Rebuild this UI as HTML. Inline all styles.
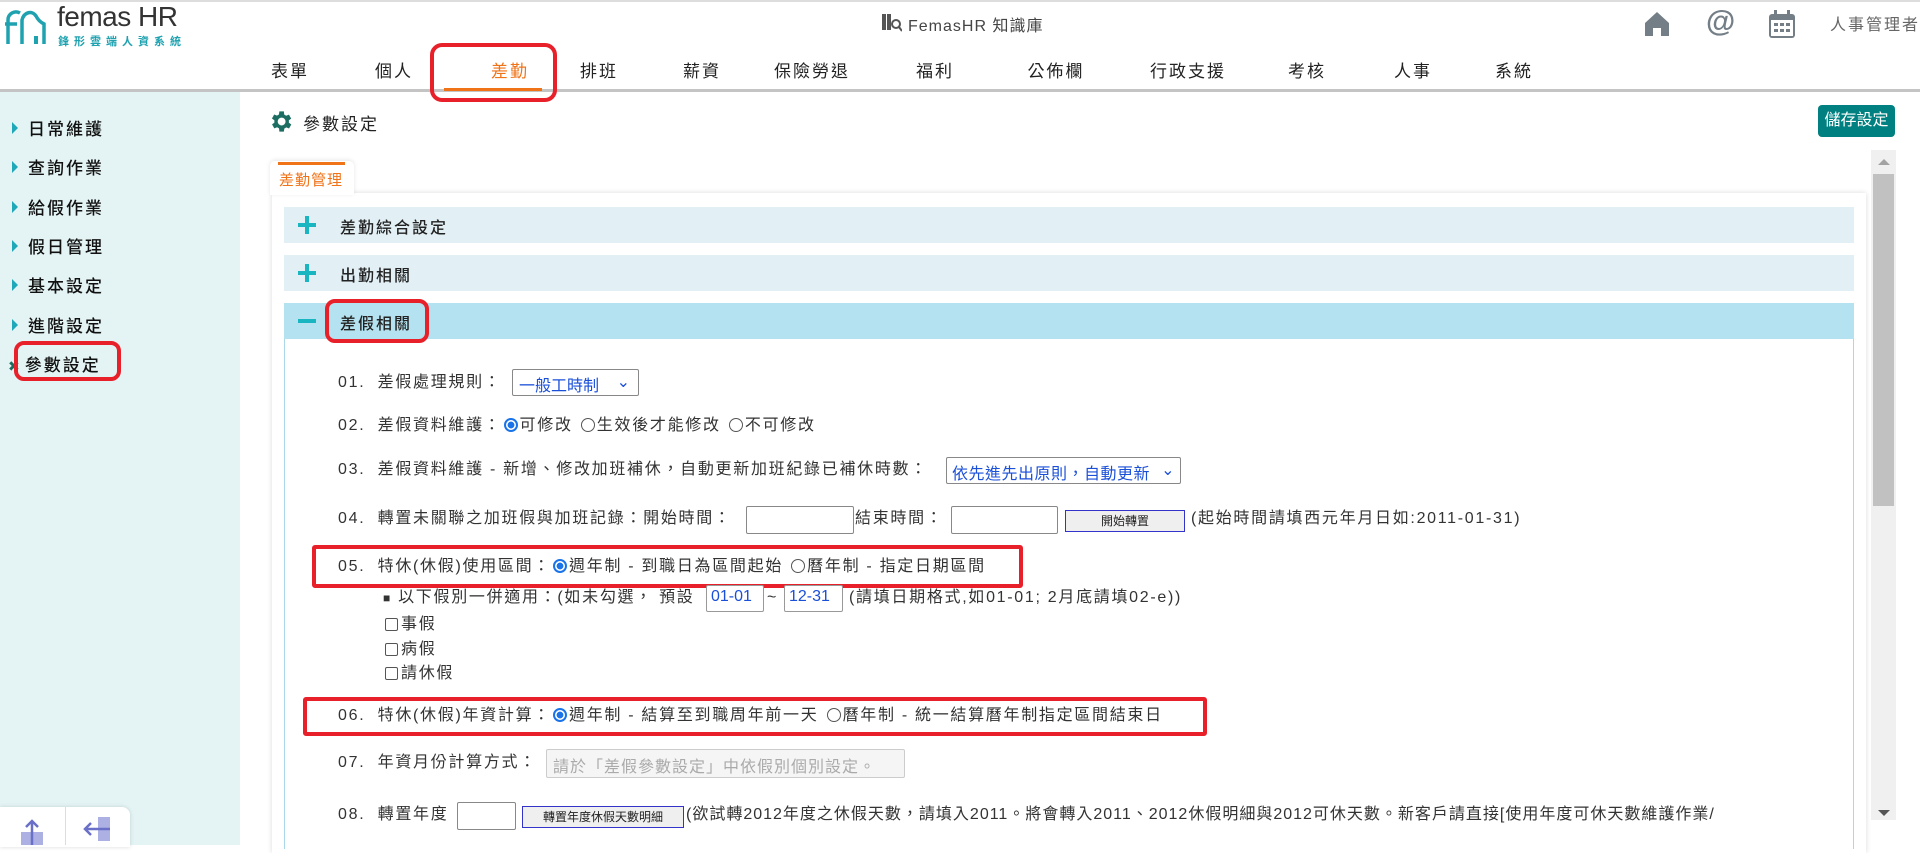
<!DOCTYPE html>
<html><head><meta charset="utf-8">
<style>
*{box-sizing:border-box;margin:0;padding:0}
body{width:1920px;height:845px;overflow:hidden;background:#fff;font-family:"Liberation Sans","Noto Sans CJK TC",sans-serif;color:#333;position:relative}
.a{position:absolute;white-space:nowrap}
.nav{top:57px;font-size:17px;color:#222;letter-spacing:2px;transform:translateX(-50%)}
.side{left:12px;font-size:17px;color:#111;letter-spacing:2px;font-weight:500}
.tri{display:inline-block;width:0;height:0;border-left:6px solid #1fa8b8;border-top:6px solid transparent;border-bottom:6px solid transparent;margin-right:10px;vertical-align:1px}
.row{left:284px;width:1570px;height:36px;background:#e2f0f6}
.row span{position:absolute;left:56px;top:7px;font-size:16px;letter-spacing:2px;color:#222;font-weight:500}
.plus{position:absolute;left:14px;top:9px;width:18px;height:18px}
.plus:before{content:"";position:absolute;left:0;top:7px;width:18px;height:4px;background:#19b5c0}
.plus.p:after{content:"";position:absolute;left:7px;top:0;width:4px;height:18px;background:#19b5c0}
.t{font-size:16px;letter-spacing:1.7px;color:#333;line-height:22px}
.box{border:1px solid #888;background:#fff;border-radius:2px}
.red{border:4px solid #e8202a;border-radius:6px}
.rd{display:inline-block;width:14px;height:14px;border-radius:50%;border:1px solid #555;vertical-align:-2px;margin:0 2px}
.rd.on{border:2px solid #1a73e8;background:radial-gradient(#1a73e8 45%,#fff 50%)}
.cb{display:inline-block;width:13px;height:13px;border:1px solid #555;border-radius:2px;vertical-align:-2px;margin-right:3px}
.btn{background:#efefef;border:1px solid #3333cc;font-size:12px;text-align:center;color:#222}
</style></head><body>
<div class="a" style="left:0;top:0;width:1920px;height:2px;background:#ddd"></div>
<svg class="a" style="left:4px;top:6px" width="44" height="40" viewBox="0 0 44 40"><path d="M4 38V14a8 8 0 0 1 12-7M1 18h12" stroke="#1fa2b0" stroke-width="3.5" fill="none"/><path d="M18 38V14c2-8 10-10 14-4 2 4 4 6 8 8v20" stroke="#1fa2b0" stroke-width="3.5" fill="none"/><rect x="30" y="30" width="4" height="8" fill="#1fa2b0"/></svg>
<div class="a" style="left:57px;top:1px;font-size:28px;color:#333;letter-spacing:-0.5px">femas HR</div>
<div class="a" style="left:58px;top:33px;font-size:11px;color:#1fa2b0;letter-spacing:5px;font-weight:bold">鋒形雲端人資系統</div>
<svg class="a" style="left:880px;top:12px" width="22" height="20" viewBox="0 0 22 20"><path d="M2 2h4v16H2zM7 2h4v16H7z" fill="#555"/><circle cx="16" cy="12" r="4" stroke="#555" stroke-width="2" fill="none"/><path d="M19 15l3 4" stroke="#555" stroke-width="2"/></svg>
<div class="a" style="left:908px;top:12px;font-size:16px;color:#444;letter-spacing:1px">FemasHR 知識庫</div>
<svg class="a" style="left:1643px;top:10px" width="28" height="28" viewBox="0 0 28 28"><path d="M14 2L2 13v13h8v-8h8v8h8V13z" fill="#747e86"/></svg>
<div class="a" style="left:1706px;top:5px;font-size:30px;color:#747e86;font-weight:bold">@</div>
<svg class="a" style="left:1768px;top:9px" width="28" height="30" viewBox="0 0 28 30"><rect x="1" y="5" width="26" height="24" rx="3" fill="#747e86"/><rect x="3" y="11" width="22" height="16" fill="#fff"/><rect x="6" y="1" width="3" height="7" fill="#747e86"/><rect x="19" y="1" width="3" height="7" fill="#747e86"/><g fill="#747e86"><rect x="6" y="14" width="4" height="3"/><rect x="12" y="14" width="4" height="3"/><rect x="18" y="14" width="4" height="3"/><rect x="6" y="20" width="4" height="3"/><rect x="12" y="20" width="4" height="3"/><rect x="18" y="20" width="4" height="3"/></g></svg>
<div class="a" style="left:1830px;top:11px;font-size:16px;color:#666;letter-spacing:2px">人事管理者</div>
<div class="a nav" style="left:290px">表單</div>
<div class="a nav" style="left:394px">個人</div>
<div class="a nav" style="left:510px;color:#f07318">差勤</div>
<div class="a nav" style="left:599px">排班</div>
<div class="a nav" style="left:702px">薪資</div>
<div class="a nav" style="left:812px">保險勞退</div>
<div class="a nav" style="left:935px">福利</div>
<div class="a nav" style="left:1056px">公佈欄</div>
<div class="a nav" style="left:1188px">行政支援</div>
<div class="a nav" style="left:1307px">考核</div>
<div class="a nav" style="left:1413px">人事</div>
<div class="a nav" style="left:1514px">系統</div>
<div class="a" style="left:0;top:89px;width:1920px;height:3px;background:#c4c4c4"></div>
<div class="a" style="left:444px;top:88px;width:98px;height:3px;background:#f07318"></div>
<div class="a red" style="left:430px;top:43px;width:127px;height:59px;border-radius:12px"></div>
<div class="a" style="left:0;top:92px;width:240px;height:753px;background:#e4f4f4"></div>
<div class="a side" style="top:115px"><span class="tri"></span>日常維護</div>
<div class="a side" style="top:154px"><span class="tri"></span>查詢作業</div>
<div class="a side" style="top:194px"><span class="tri"></span>給假作業</div>
<div class="a side" style="top:233px"><span class="tri"></span>假日管理</div>
<div class="a side" style="top:272px"><span class="tri"></span>基本設定</div>
<div class="a side" style="top:312px"><span class="tri"></span>進階設定</div>
<div class="a side" style="top:351px;left:8px"><span style="color:#1d6e62;font-size:14px;margin-right:3px">✖</span>參數設定</div>
<div class="a red" style="left:14px;top:341px;width:107px;height:40px;border-radius:10px"></div>
<div class="a" style="left:0;top:807px;width:130px;height:40px;background:#fff;border-radius:0 8px 0 0;box-shadow:0 0 4px rgba(0,0,0,.15)"></div>
<div class="a" style="left:65px;top:807px;width:1px;height:38px;background:#ddd"></div>
<svg class="a" style="left:18px;top:818px" width="30" height="27" viewBox="0 0 30 27"><rect x="3" y="14" width="22" height="13" fill="#adb0e2"/><path d="M14 27V3M8 9l6-6 6 6" stroke="#6a70c8" stroke-width="2.5" fill="none"/></svg>
<svg class="a" style="left:82px;top:817px" width="30" height="26" viewBox="0 0 30 26"><rect x="16" y="0" width="12" height="24" fill="#adb0e2"/><path d="M28 12H3M9 6l-6 6 6 6" stroke="#6a70c8" stroke-width="2.5" fill="none"/></svg>
<svg class="a" style="left:267px;top:108px" width="27" height="27" viewBox="0 0 24 24"><path fill="#1d6e62" d="M19.4 13a7.5 7.5 0 0 0 0-2l2.1-1.6-2-3.5-2.5 1a7 7 0 0 0-1.7-1L15 3h-4l-.4 2.8a7 7 0 0 0-1.7 1l-2.5-1-2 3.5L6.6 11a7.5 7.5 0 0 0 0 2l-2.1 1.6 2 3.5 2.5-1a7 7 0 0 0 1.7 1L11 21h4l.4-2.8a7 7 0 0 0 1.7-1l2.5 1 2-3.5zM13 15.5A3.5 3.5 0 1 1 13 8.5a3.5 3.5 0 0 1 0 7z"/></svg>
<div class="a" style="left:303px;top:110px;font-size:17px;color:#222;letter-spacing:2px">參數設定</div>
<div class="a" style="left:1818px;top:105px;width:77px;height:32px;background:#008080;border-radius:4px;color:#fff;font-size:16px;text-align:center;line-height:32px">儲存設定</div>
<div class="a" style="left:272px;top:193px;width:1594px;height:660px;background:#fff;box-shadow:0 0 5px rgba(0,0,0,.15)"></div>
<div class="a" style="left:270px;top:161px;width:84px;height:34px;background:#fff;border-radius:5px 5px 0 0;box-shadow:0 -1px 4px rgba(0,0,0,.1)"></div>
<div class="a" style="left:278px;top:162px;width:67px;height:3px;background:#f07318"></div>
<div class="a" style="left:279px;top:169px;font-size:15px;color:#f07318;letter-spacing:1px">差勤管理</div>
<div class="a" style="left:1871px;top:150px;width:25px;height:670px;background:#f0f0f0"></div>
<div class="a" style="left:1873px;top:174px;width:21px;height:332px;background:#c1c1c1"></div>
<div class="a" style="left:1878px;top:159px;border-left:6px solid transparent;border-right:6px solid transparent;border-bottom:6px solid #a3a3a3"></div>
<div class="a" style="left:1878px;top:810px;border-left:6px solid transparent;border-right:6px solid transparent;border-top:6px solid #555"></div>
<div class="a row" style="top:207px"><div class="plus p"></div><span>差勤綜合設定</span></div>
<div class="a row" style="top:255px"><div class="plus p"></div><span>出勤相關</span></div>
<div class="a row" style="top:303px;background:#b5e2f0"><div class="plus"></div><span>差假相關</span></div>
<div class="a red" style="left:325px;top:299px;width:104px;height:44px;border-radius:10px"></div>
<div class="a" style="left:284px;top:339px;width:1px;height:510px;background:#a8d8ea"></div>
<div class="a" style="left:1853px;top:339px;width:1px;height:510px;background:#a8d8ea"></div>

<div class="a t" style="left:338px;top:372px">01.&nbsp; 差假處理規則：</div>
<div class="a box" style="left:512px;top:369px;width:127px;height:27px;color:#1a4fd8;font-size:16px;padding:2px 6px">一般工時制 <span style="position:absolute;right:8px;top:2px;color:#1a4fd8">⌄</span></div>
<div class="a t" style="left:338px;top:415px">02.&nbsp; 差假資料維護：<span class="rd on"></span>可修改 <span class="rd"></span>生效後才能修改 <span class="rd"></span>不可修改</div>
<div class="a t" style="left:338px;top:459px">03.&nbsp; 差假資料維護 - 新增、修改加班補休，自動更新加班紀錄已補休時數：</div>
<div class="a box" style="left:946px;top:457px;width:235px;height:27px;color:#1a4fd8;font-size:16px;padding:2px 5px;letter-spacing:0.5px">依先進先出原則，自動更新 <span style="position:absolute;right:5px;top:2px">⌄</span></div>
<div class="a t" style="left:338px;top:508px">04.&nbsp; 轉置未關聯之加班假與加班記錄：開始時間：</div>
<div class="a box" style="left:746px;top:506px;width:108px;height:28px"></div>
<div class="a t" style="left:855px;top:508px">結束時間：</div>
<div class="a box" style="left:951px;top:506px;width:107px;height:28px"></div>
<div class="a btn" style="left:1065px;top:510px;width:120px;height:22px;line-height:20px">開始轉置</div>
<div class="a t" style="left:1191px;top:508px">(起始時間請填西元年月日如:2011-01-31)</div>
<div class="a red" style="left:312px;top:545px;width:711px;height:43px;border-radius:3px"></div>
<div class="a t" style="left:338px;top:556px">05.&nbsp; 特休(休假)使用區間：<span class="rd on"></span>週年制 - 到職日為區間起始 <span class="rd"></span>曆年制 - 指定日期區間</div>
<div class="a t" style="left:383px;top:587px"><span style="font-size:12px">■</span> 以下假別一併適用：(如未勾選， 預設</div>
<div class="a box" style="left:706px;top:585px;width:58px;height:27px;color:#1a4fd8;font-size:16px;padding:2px 4px;border-color:#999">01-01</div>
<div class="a t" style="left:767px;top:587px">~</div>
<div class="a box" style="left:784px;top:585px;width:59px;height:27px;color:#1a4fd8;font-size:16px;padding:2px 4px;border-color:#999">12-31</div>
<div class="a t" style="left:849px;top:587px">(請填日期格式,如01-01; 2月底請填02-e))</div>
<div class="a t" style="left:385px;top:614px"><span class="cb"></span>事假</div>
<div class="a t" style="left:385px;top:639px"><span class="cb"></span>病假</div>
<div class="a t" style="left:385px;top:663px"><span class="cb"></span>請休假</div>
<div class="a red" style="left:303px;top:697px;width:904px;height:39px;border-radius:3px"></div>
<div class="a t" style="left:338px;top:705px">06.&nbsp; 特休(休假)年資計算：<span class="rd on"></span>週年制 - 結算至到職周年前一天 <span class="rd"></span>曆年制 - 統一結算曆年制指定區間結束日</div>
<div class="a t" style="left:338px;top:752px">07.&nbsp; 年資月份計算方式：</div>
<div class="a box" style="left:546px;top:749px;width:359px;height:29px;background:#f5f5f5;border-color:#ccc;color:#aaa;font-size:16px;padding:3px 6px;letter-spacing:1px">請於「差假參數設定」中依假別個別設定。</div>
<div class="a t" style="left:338px;top:804px">08.&nbsp; 轉置年度</div>
<div class="a box" style="left:457px;top:802px;width:59px;height:28px"></div>
<div class="a btn" style="left:522px;top:806px;width:162px;height:22px;line-height:20px">轉置年度休假天數明細</div>
<div class="a t" style="left:686px;top:804px;letter-spacing:1px">(欲試轉2012年度之休假天數，請填入2011。將會轉入2011、2012休假明細與2012可休天數。新客戶請直接[使用年度可休天數維護作業/</div>
</body></html>
